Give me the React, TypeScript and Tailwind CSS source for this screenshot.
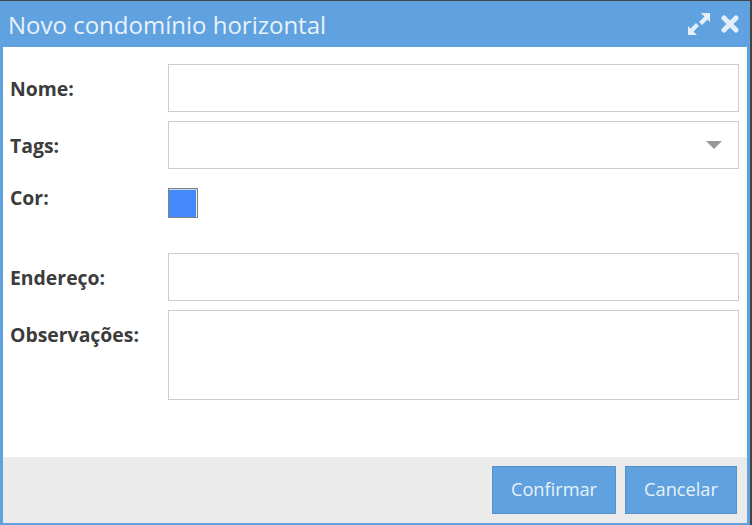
import React from "react";

const inputCls = "block h-[48px] w-[571px] border border-[#cccccc] bg-white";
const labelCls = "w-[158px] shrink-0 text-[19.4px] leading-[24px] font-bold text-[#3c3c3c]";

function Row({ label, children, className = "" }: { label: string; children: React.ReactNode; className?: string }) {
  return (
    <div className={`flex ${className}`}>
      <div className={`${labelCls} pt-[13px]`}>{label}</div>
      {children}
    </div>
  );
}

export default function App() {
  return (
    <div className="h-[525px] w-[752px] overflow-hidden bg-[#444444] pt-px pr-[2px] font-['Open_Sans',sans-serif]">
      <div className="flex h-[524px] w-[750px] flex-col border-r-[3px] border-b-[2px] border-l-[3px] border-[#5fa2df] bg-white">
        <div className="-mx-[3px] flex h-[46px] shrink-0 items-center justify-between bg-[#5fa2df] pr-[11px] pl-[8px]">
          <span className="pt-px text-[24px] leading-[30px] text-[#e8f1fa]">Novo condomínio horizontal</span>
          <div className="flex items-center gap-[11px]">
            <svg width="22" height="22" viewBox="0 0 22 22" fill="#e3eef9">
              <path d="M13 0h9v9l-2.5-2.5-5.5 5.5-3-3 5.5-5.5z" />
              <path d="M9 22H0v-9l2.5 2.5L8 10l3 3-5.500 5.500z" />
            </svg>
            <svg width="18" height="18" viewBox="0 0 18 18" fill="none" stroke="#e3eef9" strokeWidth="5" strokeLinecap="round">
              <path d="M3 3l12 12M15 3L3 15" />
            </svg>
          </div>
        </div>
        <div className="flex flex-1 flex-col pt-[17px] pl-[7px]">
          <Row label="Nome:">
            <div className={inputCls} />
          </Row>
          <Row label="Tags:" className="mt-[9px]">
            <div className={`${inputCls} flex items-center justify-end pr-[16px]`}>
              <svg width="16" height="8" viewBox="0 0 16 8" fill="#999999">
                <path d="M0 0h16L8 8z" />
              </svg>
            </div>
          </Row>
          <div className="mt-[19px] flex">
            <div className={`${labelCls} -mt-[2px]`}>Cor:</div>
            <div className="h-[30px] w-[30px] border border-[#808080]">
              <div className="h-full w-full border-t border-r border-t-[#c8d8f5] border-r-[#f0f0f0] bg-[#4488fd]" />
            </div>
          </div>
          <Row label="Endereço:" className="mt-[35px]">
            <div className={inputCls} />
          </Row>
          <div className="mt-[9px] flex">
            <div className={`${labelCls} pt-[13px]`}>Observações:</div>
            <div className="h-[90px] w-[571px] border border-[#cccccc] bg-white" />
          </div>
        </div>
        <div className="flex h-[66px] shrink-0 items-start justify-end gap-[9px] bg-[#ebebeb] pt-[9px] pr-[10px]">
          <button className="h-[48px] w-[124px] border border-[#5592cb] bg-[#5fa2df] text-[18.2px] text-[#e8f1fa]">Confirmar</button>
          <button className="h-[48px] w-[112px] border border-[#5592cb] bg-[#5fa2df] text-[18.2px] text-[#e8f1fa]">Cancelar</button>
        </div>
      </div>
    </div>
  );
}
